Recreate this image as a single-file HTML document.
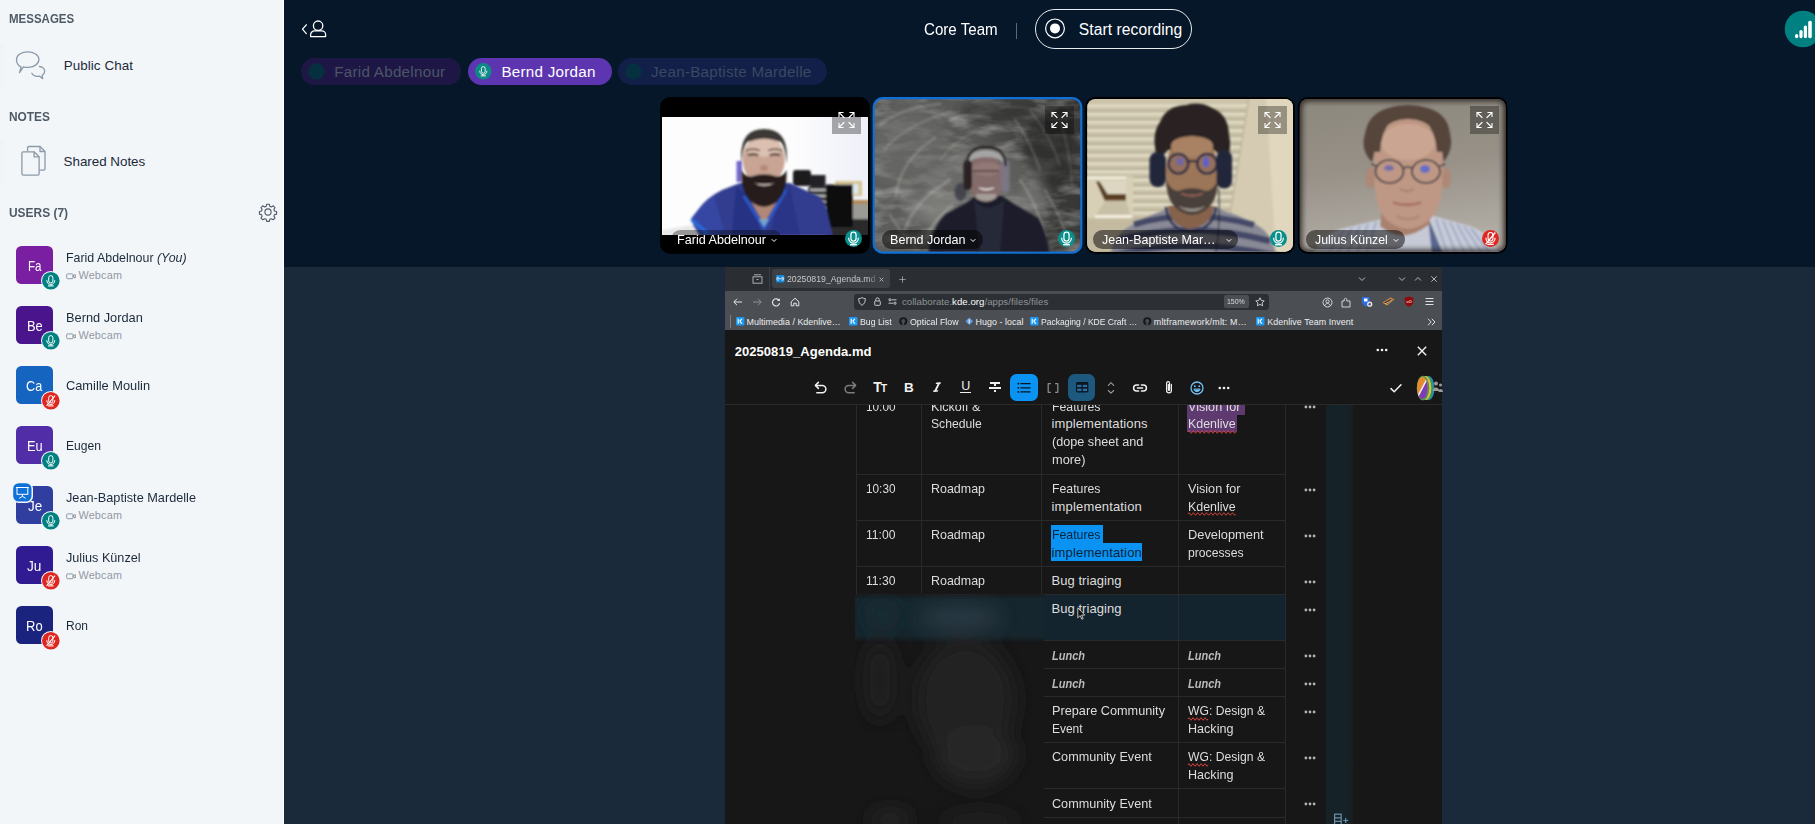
<!DOCTYPE html>
<html><head><meta charset="utf-8"><style>

html,body{margin:0;padding:0}
body{width:1815px;height:824px;overflow:hidden;position:relative;background:#06172A;font-family:"Liberation Sans",sans-serif}
.a{position:absolute;box-sizing:border-box}
.t{position:absolute;white-space:nowrap;line-height:1;display:block}
svg{position:absolute;overflow:visible}

</style></head><body>
<div class="a" style="left:284px;top:0px;width:1531px;height:267px;background:#06172A;"></div>
<div class="a" style="left:284px;top:267px;width:1531px;height:557px;background:#1B2A3A;"></div>
<div class="a" style="left:0px;top:0px;width:284px;height:824px;background:#F3F6F9;border-right:1px solid #fff;"></div>
<div class="a" style="left:0px;top:43px;width:3.5px;height:45px;background:#F0F3F7;"></div>
<div class="a" style="left:0px;top:139px;width:3.5px;height:45px;background:#F0F3F7;"></div>
<span class="t" style="left:9.1px;top:11px;font-size:13px;line-height:15px;color:#4E5A66;font-weight:700;transform:scaleX(0.8848);transform-origin:0 0;">MESSAGES</span>
<span class="t" style="left:9.2px;top:109px;font-size:13px;line-height:15px;color:#4E5A66;font-weight:700;transform:scaleX(0.9152);transform-origin:0 0;">NOTES</span>
<span class="t" style="left:9.2px;top:205px;font-size:13px;line-height:15px;color:#4E5A66;font-weight:700;transform:scaleX(0.9176);transform-origin:0 0;">USERS (7)</span>
<svg style="left:14px;top:48px" width="36" height="36" viewBox="14 48 36 36" fill="none" stroke="#8B9AA8" stroke-width="1.3" stroke-linejoin="round" stroke-linecap="round"><path d="M27.7 51.8c6.2 0 11.2 3.5 11.2 7.8s-5 7.8-11.2 7.8c-1.5 0-3-.2-4.300-.6L19.500 72.600l1.600-5.400c-2.800-1.400-4.600-4-4.600-7.600 0-4.300 5-7.800 11.200-7.800z"/><path d="M39.500 66.500c2.900.300 5.200 2.300 5.200 4.800 0 1.700-1 3.100-2.600 4l.6 3.400-3.300-2.600c-.6.100-1.200.2-1.800.2-2.600 0-4.800-1.200-5.800-3"/></svg>
<span class="t" style="left:63.7px;top:58px;font-size:13.4px;line-height:15px;color:#1B2A3A;letter-spacing:0.082px;">Public Chat</span>
<svg style="left:18px;top:142px" width="32" height="38" viewBox="18 142 32 38" fill="none" stroke="#8B9AA8" stroke-width="1.3" stroke-linejoin="round"><path d="M27.600 151.500v-3.600c0-.8.600-1.400 1.400-1.400h11l5 5v17.200c0 .8-.6 1.400-1.400 1.400h-4.300"/><path d="M40 146.500v5h5"/><path d="M23.300 151.800h10.800l5 5v17c0 .8-.6 1.400-1.400 1.400H23.300c-.8 0-1.400-.6-1.400-1.400v-20.600c0-.8.600-1.400 1.400-1.400z" fill="#F3F6F9"/><path d="M34.100 151.800v5h5"/></svg>
<span class="t" style="left:63.6px;top:154px;font-size:13.4px;line-height:15px;color:#1B2A3A;letter-spacing:-0.026px;">Shared Notes</span>
<svg style="left:259px;top:203px" width="18" height="18" viewBox="-9 -9 18 18" fill="none" stroke="#4E5A66" stroke-width="1.1" stroke-linejoin="round"><circle r="3.1"/><path d="M-1.300 -7.800h2.600l.5 2.100 1.500.6 1.900-1.100 1.800 1.800-1.100 1.900.6 1.500 2.100.5v2.600l-2.100.5-.6 1.500 1.100 1.900-1.800 1.800-1.900-1.100-1.500.6-.5 2.100h-2.600l-.5-2.100-1.500-.6-1.900 1.100-1.800-1.800 1.100-1.900-.6-1.500-2.100-.5v-2.600l2.100-.5.6-1.500-1.100-1.900 1.800-1.800 1.900 1.100 1.500-.6z"/></svg>
<div class="a" style="left:16px;top:246px;width:37px;height:38px;background:#7B1FA2;border-radius:5.500px;"></div>
<span class="t" style="left:27.7px;top:258px;font-size:14.6px;line-height:16px;color:#fff;transform:scaleX(0.7927);transform-origin:0 0;">Fa</span>
<svg style="left:40.0px;top:270.0px" width="21.6" height="21.6" viewBox="-10.8 -10.8 21.6 21.6"><circle r="9.8" fill="#F3F6F9"/><circle r="8.8" fill="#008081"/><g transform="scale(1.0)"><rect x="-2.1" y="-5.2" width="4.2" height="7.4" rx="2.1" fill="none" stroke="#fff" stroke-width="1"/><path d="M-4 -0.6 C-4 5.2 4 5.2 4 -0.6" fill="none" stroke="#fff" stroke-width="1"/><path d="M-2.8 5.1 H2.8" fill="none" stroke="#fff" stroke-width="1.1"/></g></svg>
<span class="t" style="left:66px;top:250px;font-size:13.4px;line-height:15px;color:#1B2A3A;transform:scaleX(0.9257);transform-origin:0 0;">Farid Abdelnour <i>(You)</i></span>
<svg style="left:66px;top:273px" width="11" height="7" viewBox="0 0 11 7" fill="none" stroke="#848D98" stroke-width=".9"><rect x=".7" y=".9" width="6.300" height="4.800" rx=".9"/><path d="M7.300 2.600l2-1v3.400l-2-1z"/></svg>
<span class="t" style="left:78.4px;top:269px;font-size:10.8px;line-height:12px;color:#8F98A3;letter-spacing:0.239px;">Webcam</span>
<div class="a" style="left:16px;top:306px;width:37px;height:38px;background:#4A148C;border-radius:5.500px;"></div>
<span class="t" style="left:26.7px;top:318px;font-size:14.6px;line-height:16px;color:#fff;transform:scaleX(0.8847);transform-origin:0 0;">Be</span>
<svg style="left:40.0px;top:330.0px" width="21.6" height="21.6" viewBox="-10.8 -10.8 21.6 21.6"><circle r="9.8" fill="#F3F6F9"/><circle r="8.8" fill="#008081"/><g transform="scale(1.0)"><rect x="-2.1" y="-5.2" width="4.2" height="7.4" rx="2.1" fill="none" stroke="#fff" stroke-width="1"/><path d="M-4 -0.6 C-4 5.2 4 5.2 4 -0.6" fill="none" stroke="#fff" stroke-width="1"/><path d="M-2.8 5.1 H2.8" fill="none" stroke="#fff" stroke-width="1.1"/></g></svg>
<span class="t" style="left:66px;top:310px;font-size:13.4px;line-height:15px;color:#1B2A3A;transform:scaleX(0.9551);transform-origin:0 0;">Bernd Jordan</span>
<svg style="left:66px;top:333px" width="11" height="7" viewBox="0 0 11 7" fill="none" stroke="#848D98" stroke-width=".9"><rect x=".7" y=".9" width="6.300" height="4.800" rx=".9"/><path d="M7.300 2.600l2-1v3.400l-2-1z"/></svg>
<span class="t" style="left:78.4px;top:329px;font-size:10.8px;line-height:12px;color:#8F98A3;letter-spacing:0.239px;">Webcam</span>
<div class="a" style="left:16px;top:366px;width:37px;height:38px;background:#1565C0;border-radius:5.500px;"></div>
<span class="t" style="left:26.3px;top:378px;font-size:14.6px;line-height:16px;color:#fff;transform:scaleX(0.8683);transform-origin:0 0;">Ca</span>
<svg style="left:40.0px;top:390.0px" width="21.6" height="21.6" viewBox="-10.8 -10.8 21.6 21.6"><circle r="9.8" fill="#F3F6F9"/><circle r="8.8" fill="#DF2721"/><g transform="scale(1.0)"><rect x="-2.1" y="-5.2" width="4.2" height="7.4" rx="2.1" fill="none" stroke="#fff" stroke-width="1"/><path d="M-4 -0.6 C-4 5.2 4 5.2 4 -0.6" fill="none" stroke="#fff" stroke-width="1"/><path d="M-2.8 5.1 H2.8" fill="none" stroke="#fff" stroke-width="1.1"/><path d="M-4.2 5 L4.2 -5.2" stroke="#fff" stroke-width="1.1"/></g></svg>
<span class="t" style="left:66px;top:378px;font-size:13.4px;line-height:15px;color:#1B2A3A;transform:scaleX(0.9566);transform-origin:0 0;">Camille Moulin</span>
<div class="a" style="left:16px;top:426px;width:37px;height:38px;background:#512DA8;border-radius:5.500px;"></div>
<span class="t" style="left:26.8px;top:438px;font-size:14.6px;line-height:16px;color:#fff;transform:scaleX(0.8791);transform-origin:0 0;">Eu</span>
<svg style="left:40.0px;top:450.0px" width="21.6" height="21.6" viewBox="-10.8 -10.8 21.6 21.6"><circle r="9.8" fill="#F3F6F9"/><circle r="8.8" fill="#008081"/><g transform="scale(1.0)"><rect x="-2.1" y="-5.2" width="4.2" height="7.4" rx="2.1" fill="none" stroke="#fff" stroke-width="1"/><path d="M-4 -0.6 C-4 5.2 4 5.2 4 -0.6" fill="none" stroke="#fff" stroke-width="1"/><path d="M-2.8 5.1 H2.8" fill="none" stroke="#fff" stroke-width="1.1"/></g></svg>
<span class="t" style="left:66px;top:438px;font-size:13.4px;line-height:15px;color:#1B2A3A;transform:scaleX(0.9036);transform-origin:0 0;">Eugen</span>
<div class="a" style="left:16px;top:486px;width:37px;height:38px;background:#303F9F;border-radius:5.500px;"></div>
<span class="t" style="left:27.6px;top:498px;font-size:14.6px;line-height:16px;color:#fff;transform:scaleX(0.9208);transform-origin:0 0;">Je</span>
<svg style="left:40.0px;top:509.99999999999994px" width="21.6" height="21.6" viewBox="-10.8 -10.8 21.6 21.6"><circle r="9.8" fill="#F3F6F9"/><circle r="8.8" fill="#008081"/><g transform="scale(1.0)"><rect x="-2.1" y="-5.2" width="4.2" height="7.4" rx="2.1" fill="none" stroke="#fff" stroke-width="1"/><path d="M-4 -0.6 C-4 5.2 4 5.2 4 -0.6" fill="none" stroke="#fff" stroke-width="1"/><path d="M-2.8 5.1 H2.8" fill="none" stroke="#fff" stroke-width="1.1"/></g></svg>
<span class="t" style="left:66px;top:490px;font-size:13.4px;line-height:15px;color:#1B2A3A;transform:scaleX(0.9491);transform-origin:0 0;">Jean-Baptiste Mardelle</span>
<svg style="left:66px;top:513px" width="11" height="7" viewBox="0 0 11 7" fill="none" stroke="#848D98" stroke-width=".9"><rect x=".7" y=".9" width="6.300" height="4.800" rx=".9"/><path d="M7.300 2.600l2-1v3.400l-2-1z"/></svg>
<span class="t" style="left:78.4px;top:509px;font-size:10.8px;line-height:12px;color:#8F98A3;letter-spacing:0.239px;">Webcam</span>
<svg style="left:12px;top:482px" width="21" height="21" viewBox="0 0 21 21"><rect x="0" y="0" width="21" height="21" rx="6.500" fill="#F3F6F9"/><rect x="1.200" y="1.200" width="18.300" height="18.300" rx="5.500" fill="#0F70D7"/><g fill="none" stroke="#fff" stroke-width="1"><rect x="5" y="5.500" width="10.800" height="6.800"/><path d="M4 5.500h12.800M10.400 12.300v2M7.200 16.300l3.200-2 3.200 2"/></g></svg>
<div class="a" style="left:16px;top:546px;width:37px;height:38px;background:#311B92;border-radius:5.500px;"></div>
<span class="t" style="left:27.3px;top:558px;font-size:14.6px;line-height:16px;color:#fff;transform:scaleX(0.9337);transform-origin:0 0;">Ju</span>
<svg style="left:40.0px;top:570.0px" width="21.6" height="21.6" viewBox="-10.8 -10.8 21.6 21.6"><circle r="9.8" fill="#F3F6F9"/><circle r="8.8" fill="#DF2721"/><g transform="scale(1.0)"><rect x="-2.1" y="-5.2" width="4.2" height="7.4" rx="2.1" fill="none" stroke="#fff" stroke-width="1"/><path d="M-4 -0.6 C-4 5.2 4 5.2 4 -0.6" fill="none" stroke="#fff" stroke-width="1"/><path d="M-2.8 5.1 H2.8" fill="none" stroke="#fff" stroke-width="1.1"/><path d="M-4.2 5 L4.2 -5.2" stroke="#fff" stroke-width="1.1"/></g></svg>
<span class="t" style="left:66px;top:550px;font-size:13.4px;line-height:15px;color:#1B2A3A;transform:scaleX(0.9454);transform-origin:0 0;">Julius Künzel</span>
<svg style="left:66px;top:573px" width="11" height="7" viewBox="0 0 11 7" fill="none" stroke="#848D98" stroke-width=".9"><rect x=".7" y=".9" width="6.300" height="4.800" rx=".9"/><path d="M7.300 2.600l2-1v3.400l-2-1z"/></svg>
<span class="t" style="left:78.4px;top:569px;font-size:10.8px;line-height:12px;color:#8F98A3;letter-spacing:0.239px;">Webcam</span>
<div class="a" style="left:16px;top:606px;width:37px;height:38px;background:#1A237E;border-radius:5.500px;"></div>
<span class="t" style="left:26.2px;top:618px;font-size:14.6px;line-height:16px;color:#fff;transform:scaleX(0.8898);transform-origin:0 0;">Ro</span>
<svg style="left:40.0px;top:630.0px" width="21.6" height="21.6" viewBox="-10.8 -10.8 21.6 21.6"><circle r="9.8" fill="#F3F6F9"/><circle r="8.8" fill="#DF2721"/><g transform="scale(1.0)"><rect x="-2.1" y="-5.2" width="4.2" height="7.4" rx="2.1" fill="none" stroke="#fff" stroke-width="1"/><path d="M-4 -0.6 C-4 5.2 4 5.2 4 -0.6" fill="none" stroke="#fff" stroke-width="1"/><path d="M-2.8 5.1 H2.8" fill="none" stroke="#fff" stroke-width="1.1"/><path d="M-4.2 5 L4.2 -5.2" stroke="#fff" stroke-width="1.1"/></g></svg>
<span class="t" style="left:66px;top:618px;font-size:13.4px;line-height:15px;color:#1B2A3A;transform:scaleX(0.8951);transform-origin:0 0;">Ron</span>
<svg style="left:300px;top:18px" width="30" height="22" viewBox="300 18 30 22" fill="none" stroke="#fff" stroke-width="1.300" stroke-linecap="round" stroke-linejoin="round"><path d="M306.300 24.800l-3.800 4.400 3.800 4.400"/><circle cx="318.100" cy="25.700" r="4.700"/><path d="M310.600 36.600v-1.800c0-2.200 1.800-3.900 3.900-3.900h7.200c2.200 0 3.900 1.800 3.900 3.900v1.800z"/></svg>
<span class="t" style="left:923.5px;top:21px;font-size:15.6px;line-height:17px;color:#fff;transform:scaleX(0.9699);transform-origin:0 0;">Core Team</span>
<div class="a" style="left:1016px;top:23px;width:1px;height:16px;background:#5F6975;"></div>
<div class="a" style="left:1034.7px;top:9.1px;width:157px;height:39.7px;border:1px solid #E8EBEE;border-radius:20px;"></div>
<svg style="left:1043px;top:16px" width="24" height="25" viewBox="-12 -12.400 24 25"><circle r="9.400" fill="none" stroke="#fff" stroke-width="1.200"/><circle r="5" fill="#fff"/></svg>
<span class="t" style="left:1078.8px;top:21px;font-size:15.6px;line-height:17px;color:#fff;letter-spacing:0.087px;">Start recording</span>
<svg style="left:1784px;top:10px" width="38" height="38" viewBox="-19 -19 38 38"><circle r="18.300" fill="#008081"/><g fill="#fff"><rect x="-8" y="5" width="3.200" height="4.200" rx="1.600"/><rect x="-3.600" y="1" width="3.200" height="8.200" rx="1.600"/><rect x=".8" y="-3.500" width="3.200" height="12.700" rx="1.600"/><rect x="5.200" y="-8.300" width="3.600" height="17.500" rx="1.600"/></g></svg>
<div class="a" style="left:301px;top:58px;width:160px;height:26.7px;background:#1E1745;border-radius:13.400px;"></div>
<svg style="left:308px;top:63px" width="17" height="17" viewBox="-8.500 -8.500 17 17"><circle r="8.300" fill="#062F40"/></svg>
<span class="t" style="left:334.2px;top:63px;font-size:15.2px;line-height:17px;color:#4C5568;letter-spacing:0.269px;">Farid Abdelnour</span>
<div class="a" style="left:467.9px;top:58px;width:144.3px;height:26.7px;background:#5E35B1;border-radius:13.400px;"></div>
<svg style="left:473.3px;top:61.10000000000001px" width="20.6" height="20.6" viewBox="-10.3 -10.3 20.6 20.6"><circle r="8.3" fill="#0B8A86"/><g transform="scale(0.9)"><rect x="-2.1" y="-5.2" width="4.2" height="7.4" rx="2.1" fill="none" stroke="#fff" stroke-width="1"/><path d="M-4 -0.6 C-4 5.2 4 5.2 4 -0.6" fill="none" stroke="#fff" stroke-width="1"/><path d="M-2.8 5.1 H2.8" fill="none" stroke="#fff" stroke-width="1.1"/></g></svg>
<span class="t" style="left:501.4px;top:63px;font-size:15.2px;line-height:17px;color:#fff;letter-spacing:0.256px;">Bernd Jordan</span>
<div class="a" style="left:618px;top:58px;width:209px;height:26.7px;background:#111F49;border-radius:13.400px;"></div>
<svg style="left:625px;top:63px" width="17" height="17" viewBox="-8.500 -8.500 17 17"><circle r="8.300" fill="#062F40"/></svg>
<span class="t" style="left:651px;top:63px;font-size:15.2px;line-height:17px;color:#3C4861;letter-spacing:0.236px;">Jean-Baptiste Mardelle</span>
<svg style="left:650px;top:90px" width="870" height="172" viewBox="650 90 870 172"><defs><filter id="b1" x="-20%" y="-20%" width="140%" height="140%"><feGaussianBlur stdDeviation="1.200"/></filter><filter id="b2" x="-20%" y="-20%" width="140%" height="140%"><feGaussianBlur stdDeviation="2.500"/></filter><filter id="b4" x="-30%" y="-30%" width="160%" height="160%"><feGaussianBlur stdDeviation="5"/></filter><filter id="nz" x="0" y="0" width="100%" height="100%"><feTurbulence type="fractalNoise" baseFrequency=".035 .09" numOctaves="3" seed="7"/><feColorMatrix type="matrix" values="0 0 0 0 .78  0 0 0 0 .78  0 0 0 0 .76  1.500 0 0 0 -.62"/></filter><clipPath id="c1"><rect x="662" y="117" width="206" height="118"/></clipPath><clipPath id="c2"><rect x="874.8000000000001" y="99.2" width="205.4" height="152.29999999999998" rx="8"/></clipPath><clipPath id="c3"><rect x="1087.2" y="99" width="205.8" height="152.7" rx="8"/></clipPath><clipPath id="c4"><rect x="1299.8" y="99" width="205.8" height="152.7" rx="8"/></clipPath><radialGradient id="vg4" cx=".5" cy=".5" r=".72"><stop offset=".8" stop-color="#000" stop-opacity="0"/><stop offset="1" stop-color="#000" stop-opacity=".5"/></radialGradient><linearGradient id="w1" x1="0" x2="1" y1="0" y2="0"><stop offset="0" stop-color="#FDFDFD"/><stop offset="1" stop-color="#EEF0F8"/></linearGradient><linearGradient id="bg3" x1="0" x2="1" y1="0" y2="0"><stop offset="0" stop-color="#EFE6CC"/><stop offset=".55" stop-color="#E9DFC2"/><stop offset="1" stop-color="#D9CCA6"/></linearGradient><linearGradient id="bg2" x1="0" x2="1" y1="0" y2="0"><stop offset="0" stop-color="#5E5E5C"/><stop offset=".5" stop-color="#565654"/><stop offset=".75" stop-color="#3E3E3C"/><stop offset="1" stop-color="#363634"/></linearGradient><linearGradient id="bg4" x1="0" x2=".15" y1="0" y2="1"><stop offset="0" stop-color="#8C877D"/><stop offset=".5" stop-color="#979188"/><stop offset="1" stop-color="#B2ADA5"/></linearGradient></defs><rect x="660" y="97" width="209.8" height="156.7" rx="10" fill="#000"/><g clip-path="url(#c1)"><rect x="662" y="117" width="206" height="118" fill="#FDFDFD"/><rect x="790" y="117" width="78" height="90" fill="url(#w1)"/><g filter="url(#b1)"><rect x="835" y="181" width="27" height="15" fill="#D6C48E"/><rect x="838.500" y="184" width="20" height="10" fill="#DCE8EE"/><rect x="850" y="200" width="20" height="4" fill="#B08A58"/><rect x="850" y="204" width="20" height="16" fill="#9C9A94"/><rect x="826" y="219" width="44" height="18" fill="#2B2B2B"/><rect x="808" y="187" width="20" height="30" fill="#3A3A3C"/><path d="M810 190h16M810 196h16M810 202h16M810 208h16" stroke="#E4E4E4" stroke-width="1.600"/><rect x="825.800" y="184.600" width="27" height="42.500" fill="#0B0B0D"/><rect x="793" y="170" width="18" height="16" rx="3" fill="#1B1B1E"/><rect x="810" y="175" width="15.500" height="12" fill="#242428"/><rect x="736.500" y="161" width="5.500" height="21" fill="#7468CC"/><path d="M662 236 L662 230 L700 224 L730 229 L730 236Z" fill="#E8E8E8"/></g><g filter="url(#b1)"><path d="M700 236 L694 226 L691 219 L698 210 Q706 198 722 190 L740 183 L790 183 L818 196 Q826 202 828 214 L833 236 Z" fill="#303C90"/><path d="M691 219 L698 210 Q704 202 714 196 L724 230 L708 236 L700 236 L694 226Z" fill="#3646A2"/><path d="M691.500 219.500 L708 234" stroke="#2A6ADA" stroke-width="3.400"/><path d="M736 186 L732 236 L762 236 L752 200Z" fill="#283284"/><path d="M790 186 L800 236 L770 236 L778 200Z" fill="#2A3588"/><path d="M744 196 L764 228 L786 190" stroke="#2C5CCC" stroke-width="2.600" fill="none"/><path d="M750 200 L764 224 L780 196Z" fill="#B08874"/><path d="M759 219 L764 227 L769 219Z" fill="#7CA6C4"/><ellipse cx="763.700" cy="160" rx="21" ry="25" fill="#C8A494"/><ellipse cx="764" cy="148" rx="17.500" ry="9" fill="#DCC0B0"/><path d="M741.500 164 Q738 129 764 129 Q790 129 786.500 164 Q785.500 148 781 142 Q764 135 747 142 Q742.500 148 741.500 164Z" fill="#3A3835"/><path d="M741.500 170 Q740 204 764 207 Q788 204 786.500 170 Q784 176 777 176.500 Q764 172 751 176.500 Q744 176 741.500 170Z" fill="#251F1E"/><path d="M754 183 Q764 188.500 775 183 Q764 185.500 754 183Z" fill="#E6D4CC"/><path d="M748 155.500 Q753 153 758.500 155.500M769.500 155.500 Q775 153 780 155.500" stroke="#3A2824" stroke-width="1.800" fill="none"/><path d="M746 150.500 Q753 148 760 150.500M768 150.500 Q775 148 782 150.500" stroke="#4A3830" stroke-width="1.300" fill="none"/><ellipse cx="764" cy="168" rx="4" ry="3" fill="#B48878"/></g></g><rect x="872.6" y="97" width="209.8" height="156.7" rx="10" fill="#0F70D7"/><g clip-path="url(#c2)"><rect x="872.6" y="97" width="209.8" height="156.7" fill="url(#bg2)"/><rect x="872.6" y="97" width="209.8" height="156.7" filter="url(#nz)" opacity=".6"/><g filter="url(#b4)"><ellipse cx="912" cy="150" rx="40" ry="40" fill="#6C6C69" opacity=".55"/><ellipse cx="930" cy="208" rx="26" ry="16" fill="#8A8A87" opacity=".5"/><ellipse cx="1050" cy="150" rx="26" ry="40" fill="#2A2A28" opacity=".65"/><ellipse cx="1000" cy="112" rx="40" ry="12" fill="#2E2E2C" opacity=".6"/><ellipse cx="1030" cy="200" rx="16" ry="14" fill="#7A7A77" opacity=".5"/><ellipse cx="987" cy="205" rx="62" ry="56" fill="#8C8C89" opacity=".35"/></g><g filter="url(#b1)"><path d="M880 125 Q900 108 940 104" stroke="#D8D8D4" stroke-width="3" opacity="0.22" fill="none" stroke-linecap="round"/><path d="M884 150 Q905 125 950 112" stroke="#D8D8D4" stroke-width="2.5" opacity="0.18" fill="none" stroke-linecap="round"/><path d="M896 196 Q900 160 935 138" stroke="#D8D8D4" stroke-width="3" opacity="0.2" fill="none" stroke-linecap="round"/><path d="M905 230 Q915 200 950 180" stroke="#D8D8D4" stroke-width="3.5" opacity="0.22" fill="none" stroke-linecap="round"/><path d="M925 244 Q930 222 952 206" stroke="#D8D8D4" stroke-width="3" opacity="0.25" fill="none" stroke-linecap="round"/><path d="M950 120 Q965 112 990 118" stroke="#D8D8D4" stroke-width="2.5" opacity="0.2" fill="none" stroke-linecap="round"/><path d="M940 160 Q955 140 975 132" stroke="#D8D8D4" stroke-width="2" opacity="0.16" fill="none" stroke-linecap="round"/><path d="M1015 120 Q1030 140 1040 170" stroke="#D8D8D4" stroke-width="2.5" opacity="0.18" fill="none" stroke-linecap="round"/><path d="M1030 110 Q1050 135 1060 165" stroke="#D8D8D4" stroke-width="2" opacity="0.16" fill="none" stroke-linecap="round"/><path d="M1020 180 Q1035 200 1045 235" stroke="#D8D8D4" stroke-width="3" opacity="0.22" fill="none" stroke-linecap="round"/><path d="M1045 190 Q1060 215 1068 240" stroke="#D8D8D4" stroke-width="2.5" opacity="0.2" fill="none" stroke-linecap="round"/><path d="M1000 108 Q1020 104 1045 112" stroke="#D8D8D4" stroke-width="2" opacity="0.14" fill="none" stroke-linecap="round"/><path d="M890 215 Q900 232 915 246" stroke="#D8D8D4" stroke-width="3" opacity="0.2" fill="none" stroke-linecap="round"/><path d="M960 226 Q940 236 925 250" stroke="#D8D8D4" stroke-width="2.5" opacity="0.15" fill="none" stroke-linecap="round"/><path d="M1060 120 Q1070 150 1072 185" stroke="#D8D8D4" stroke-width="2" opacity="0.15" fill="none" stroke-linecap="round"/></g><g filter="url(#b1)"><path d="M928 256 Q932 226 946 214 L966 203 L976 196 L1002 196 L1014 204 L1038 218 Q1046 230 1050 256 Z" fill="#1C1F29"/><path d="M974 200 Q988 216 1004 200 L1000 252 L980 252Z" fill="#262A38"/><ellipse cx="960.500" cy="192" rx="6" ry="9" fill="#3A3C44" opacity=".8"/><ellipse cx="986" cy="178" rx="18" ry="24" fill="#846C6A"/><ellipse cx="986.500" cy="169" rx="14" ry="7" fill="#927876"/><path d="M966 172 Q964 150 986 150 Q1008 150 1006 172 Q1004 162 998 159 Q986 155 974 159 Q968 162 966 172Z" fill="#A4A4A4"/><rect x="963.500" y="160" width="8.500" height="30" rx="4.200" fill="#2A2024"/><rect x="1001" y="160" width="8.500" height="32" rx="4.200" fill="#7C7684"/><path d="M966.500 166 Q968 147 986 147 Q1004 147 1006 166" fill="none" stroke="#2E2628" stroke-width="2.400"/><path d="M973 171h26" stroke="#5A4A48" stroke-width="1.800"/><path d="M979 188 Q986 192 994 188 Q986 190 979 188Z" fill="#E8E0E0" stroke="#E8E0E0" stroke-width=".8"/><path d="M976 198 Q986 204 996 198 L996 194 L976 194Z" fill="#A49C98"/></g></g><rect x="1085.2" y="97" width="209.8" height="156.7" rx="10" fill="#000"/><g clip-path="url(#c3)"><rect x="1085.2" y="97" width="209.8" height="156.7" fill="#CBC3AA"/><g filter="url(#b1)"><rect x="1085.2" y="104.5" width="170" height="2.600" fill="#E6E0CA" opacity=".9"/><rect x="1085.2" y="110.1" width="170" height="2" fill="#B6AE96" opacity=".8"/><rect x="1085.2" y="112.75" width="170" height="2.600" fill="#E6E0CA" opacity=".9"/><rect x="1085.2" y="118.35" width="170" height="2" fill="#B6AE96" opacity=".8"/><rect x="1085.2" y="121" width="170" height="2.600" fill="#E6E0CA" opacity=".9"/><rect x="1085.2" y="126.6" width="170" height="2" fill="#B6AE96" opacity=".8"/><rect x="1085.2" y="129.25" width="170" height="2.600" fill="#E6E0CA" opacity=".9"/><rect x="1085.2" y="134.85" width="170" height="2" fill="#B6AE96" opacity=".8"/><rect x="1085.2" y="137.5" width="170" height="2.600" fill="#E6E0CA" opacity=".9"/><rect x="1085.2" y="143.1" width="170" height="2" fill="#B6AE96" opacity=".8"/><rect x="1085.2" y="145.75" width="170" height="2.600" fill="#E6E0CA" opacity=".9"/><rect x="1085.2" y="151.35" width="170" height="2" fill="#B6AE96" opacity=".8"/><rect x="1085.2" y="154" width="170" height="2.600" fill="#E6E0CA" opacity=".9"/><rect x="1085.2" y="159.6" width="170" height="2" fill="#B6AE96" opacity=".8"/><rect x="1085.2" y="162.25" width="170" height="2.600" fill="#E6E0CA" opacity=".9"/><rect x="1085.2" y="167.85" width="170" height="2" fill="#B6AE96" opacity=".8"/><rect x="1085.2" y="170.5" width="170" height="2.600" fill="#E6E0CA" opacity=".9"/><rect x="1085.2" y="176.1" width="170" height="2" fill="#B6AE96" opacity=".8"/><rect x="1085.2" y="178.75" width="170" height="2.600" fill="#E6E0CA" opacity=".9"/><rect x="1085.2" y="184.35" width="170" height="2" fill="#B6AE96" opacity=".8"/><rect x="1085.2" y="187" width="170" height="2.600" fill="#E6E0CA" opacity=".9"/><rect x="1085.2" y="192.6" width="170" height="2" fill="#B6AE96" opacity=".8"/><rect x="1085.2" y="195.25" width="170" height="2.600" fill="#E6E0CA" opacity=".9"/><rect x="1085.2" y="200.85" width="170" height="2" fill="#B6AE96" opacity=".8"/><rect x="1085.2" y="203.5" width="170" height="2.600" fill="#E6E0CA" opacity=".9"/><rect x="1085.2" y="209.1" width="170" height="2" fill="#B6AE96" opacity=".8"/><rect x="1085.2" y="211.75" width="170" height="2.600" fill="#E6E0CA" opacity=".9"/><rect x="1085.2" y="217.35" width="170" height="2" fill="#B6AE96" opacity=".8"/><path d="M1249 97 L1230 214 L1226 256 L1300 256 L1300 97Z" fill="#D5CBB2"/><path d="M1266 97 L1276 256 L1300 256 L1300 97Z" fill="#E1D7BE"/><path d="M1249 97 L1230 214" stroke="#BEB498" stroke-width="1.500"/><rect x="1086" y="176.500" width="47" height="42" fill="#D8D0B6"/><rect x="1086" y="176.500" width="40" height="2.400" fill="#F4F0E0"/><rect x="1095" y="215" width="37" height="2.800" fill="#F4F0E0"/><path d="M1086 180 L1096 181 L1106 199 L1126 200 L1126 181 L1096 181Z" fill="#DCD6C2"/><path d="M1106 200 L1126 200 L1130 215 L1096 215Z" fill="#C8C0A6"/><path d="M1096 181.500 L1099.500 181.500 L1107.500 194 L1126 194 L1126 200.500 L1104.500 200.500Z" fill="#5A3C24"/><rect x="1086" y="219" width="48" height="38" fill="#C4BAA0"/></g><g filter="url(#b1)"><path d="M1110 256 Q1112 240 1124 230 Q1140 219 1164 210 L1172 206 L1212 206 L1222 210 Q1250 219 1264 230 Q1274 240 1276 256Z" fill="#8A8A96"/><path d="M1118 240 Q1190 220 1270 241" stroke="#444A68" stroke-width="6.500" fill="none"/><path d="M1134 224.500 Q1190 208 1254 225" stroke="#444A68" stroke-width="6" fill="none"/><path d="M1110 256 Q1190 236 1278 256" stroke="#444A68" stroke-width="6.500" fill="none"/><path d="M1168 206 Q1170 226 1190 229 Q1212 226 1214 206Z" fill="#86624C"/><path d="M1166 207 Q1168 229 1190 232 Q1214 229 1216 207" stroke="#2C3150" stroke-width="2.600" fill="none"/><path d="M1158 160 Q1150 136 1160 122 Q1166 106 1186 105 Q1200 101 1212 108 Q1228 114 1229 134 Q1232 148 1227 160 L1214 150 L1168 150Z" fill="#2A2420"/><ellipse cx="1192" cy="172" rx="26" ry="40" fill="#9C7658"/><ellipse cx="1192" cy="146" rx="21" ry="11" fill="#A88264"/><path d="M1166 150 Q1168 130 1192 129 Q1216 130 1218 150 Q1214 137 1192 136 Q1170 137 1166 150Z" fill="#2A2420"/><path d="M1166 178 Q1166 212 1192 215 Q1218 212 1218 178 Q1215 190 1206 191 Q1192 185 1178 191 Q1169 190 1166 178Z" fill="#4A403A"/><path d="M1178 206 Q1192 217 1206 206 Q1192 212 1178 206Z" fill="#9C9690"/><path d="M1181 193.500 Q1192 198 1203 193.500" stroke="#9A6458" stroke-width="1.800" fill="none"/><rect x="1149.500" y="152" width="16.500" height="35" rx="8" fill="#22263A"/><rect x="1216.500" y="150" width="15.500" height="38.500" rx="7.500" fill="#22263A"/><circle cx="1178.400" cy="163.700" r="9.800" fill="#94705A" stroke="#222846" stroke-width="2.200"/><circle cx="1207" cy="163.700" r="9.800" fill="#94705A" stroke="#222846" stroke-width="2.200"/><path d="M1188 162 Q1192.500 160 1197 162" stroke="#1E2440" stroke-width="1.800" fill="none"/><ellipse cx="1206" cy="162" rx="3" ry="5.500" fill="#4C5CE8" opacity=".8"/><ellipse cx="1180" cy="161.500" rx="4" ry="4" fill="#4C5CE8" opacity=".5"/><path d="M1218.500 188 Q1221 220 1215.500 256" stroke="#20202A" stroke-width="1" fill="none"/></g></g><rect x="1297.8" y="97" width="209.8" height="156.7" rx="10" fill="#000"/><g clip-path="url(#c4)"><rect x="1297.8" y="97" width="209.8" height="156.7" fill="url(#bg4)"/><g filter="url(#b1)"><path d="M1312 256 Q1320 236 1342 228.500 L1382 219 L1400 232 L1420 228 L1430 215 L1470 226 Q1492 234 1500 256Z" fill="#C6CAD6"/><path d="M1436 219 L1448 256M1443 220.500 L1457 256M1450 222 L1466 256M1457 224 L1475 256M1464 226 L1484 256M1471 228.500 L1492 256M1376 222 L1366 256M1368 224 L1356 256M1360 226 L1346 256M1352 228 L1336 256M1344 230 L1326 256" stroke="#8E9CC4" stroke-width="1.300"/><path d="M1428 217 L1432 256 L1444 256Z" fill="#5A6890"/><path d="M1382 208 L1380 226 Q1402 246 1430 224 L1430 208Z" fill="#A8826E"/><path d="M1372 162 Q1360 150 1365 134 Q1368 114 1388 108 Q1408 102 1428 108 Q1448 114 1450 134 Q1454 150 1443 162 L1436 140 L1378 140Z" fill="#54443A"/><ellipse cx="1370.500" cy="178" rx="5" ry="10.500" fill="#AE8876"/><ellipse cx="1446" cy="178" rx="5" ry="10.500" fill="#AE8876"/><path d="M1374 160 Q1374 120 1408 119 Q1442 120 1443 160 L1442 190 Q1438 226 1408 229 Q1378 226 1375 190Z" fill="#BE9884"/><ellipse cx="1408" cy="142" rx="27" ry="18" fill="#CAA692"/><path d="M1373 152 Q1374 126 1392 119 Q1381 132 1380 152Z" fill="#54443A"/><path d="M1444 152 Q1443 126 1424 119 Q1436 132 1437 152Z" fill="#54443A"/><ellipse cx="1389.500" cy="171.500" rx="14" ry="11.500" fill="none" stroke="#30303C" stroke-width="1.600"/><ellipse cx="1426" cy="171.500" rx="14" ry="11.500" fill="none" stroke="#30303C" stroke-width="1.600"/><path d="M1372 164 L1376 166M1440 166 L1445 164M1403.500 168 Q1407.500 166 1412 168" stroke="#30303C" stroke-width="1.600" fill="none"/><ellipse cx="1389" cy="168" rx="5" ry="3" fill="#3C4CC8" opacity=".55"/><ellipse cx="1425" cy="169" rx="5" ry="4" fill="#3C5CE0" opacity=".7"/><path d="M1393 202.500 Q1407 207 1421 202.500" stroke="#A86E66" stroke-width="2.800" fill="none"/><path d="M1400 189 Q1407 193 1414 189" stroke="#A67E6C" stroke-width="1.800" fill="none"/><path d="M1396 216 Q1408 222 1420 216" stroke="#B08A76" stroke-width="3" fill="none"/></g><rect x="1297.8" y="97" width="209.8" height="156.7" rx="10" fill="none" stroke="#1A1814" stroke-width="9" filter="url(#b2)" opacity=".75"/></g></svg>
<svg style="left:832.3px;top:105.6px" width="29" height="28" viewBox="0 0 29 28"><rect width="29" height="28" fill="rgba(0,0,0,.33)"/><g fill="none" stroke="#fff" stroke-width="1.100" stroke-linecap="square"><path d="M7 6.500L12 11.500M7 10.500v-4h4"/><path d="M22 6.500L17 11.500M22 10.500v-4h-4"/><path d="M7 21.500L12 16.500M7 17.500v4h4"/><path d="M22 21.500L17 16.500M22 17.500v4h-4"/></g></svg>
<svg style="left:1044.9px;top:105.6px" width="29" height="28" viewBox="0 0 29 28"><rect width="29" height="28" fill="rgba(0,0,0,.33)"/><g fill="none" stroke="#fff" stroke-width="1.100" stroke-linecap="square"><path d="M7 6.500L12 11.500M7 10.500v-4h4"/><path d="M22 6.500L17 11.500M22 10.500v-4h-4"/><path d="M7 21.500L12 16.500M7 17.500v4h4"/><path d="M22 21.500L17 16.500M22 17.500v4h-4"/></g></svg>
<svg style="left:1257.5px;top:105.6px" width="29" height="28" viewBox="0 0 29 28"><rect width="29" height="28" fill="rgba(0,0,0,.33)"/><g fill="none" stroke="#fff" stroke-width="1.100" stroke-linecap="square"><path d="M7 6.500L12 11.500M7 10.500v-4h4"/><path d="M22 6.500L17 11.500M22 10.500v-4h-4"/><path d="M7 21.500L12 16.500M7 17.500v4h4"/><path d="M22 21.500L17 16.500M22 17.500v4h-4"/></g></svg>
<svg style="left:1470.1px;top:105.6px" width="29" height="28" viewBox="0 0 29 28"><rect width="29" height="28" fill="rgba(0,0,0,.33)"/><g fill="none" stroke="#fff" stroke-width="1.100" stroke-linecap="square"><path d="M7 6.500L12 11.500M7 10.500v-4h4"/><path d="M22 6.500L17 11.500M22 10.500v-4h-4"/><path d="M7 21.500L12 16.500M7 17.500v4h4"/><path d="M22 21.500L17 16.500M22 17.500v4h-4"/></g></svg>
<div class="a" style="left:670.6px;top:230.2px;width:111.4px;height:18.6px;background:rgba(0,0,0,0.35);border-radius:9.300px;"></div>
<span class="t" style="left:677.4px;top:232px;font-size:13.3px;line-height:15px;color:#fff;transform:scaleX(0.9479);transform-origin:0 0;">Farid Abdelnour</span>
<svg style="left:771px;top:238px" width="6" height="5" viewBox="0 0 6 5" fill="none" stroke="#fff" stroke-width="1"><path d="M.7 1.200l2.300 2.300 2.300-2.300"/></svg>
<div class="a" style="left:882px;top:230.2px;width:101px;height:18.6px;background:rgba(0,0,0,0.5);border-radius:9.300px;"></div>
<span class="t" style="left:889.8px;top:232px;font-size:13.3px;line-height:15px;color:#fff;transform:scaleX(0.9456);transform-origin:0 0;">Bernd Jordan</span>
<svg style="left:970px;top:238px" width="6" height="5" viewBox="0 0 6 5" fill="none" stroke="#fff" stroke-width="1"><path d="M.7 1.200l2.300 2.300 2.300-2.300"/></svg>
<div class="a" style="left:1093px;top:230.2px;width:145px;height:18.6px;background:rgba(0,0,0,0.5);border-radius:9.300px;"></div>
<span class="t" style="left:1102px;top:232px;font-size:13.3px;line-height:15px;color:#fff;transform:scaleX(0.9364);transform-origin:0 0;">Jean-Baptiste Mar…</span>
<svg style="left:1226px;top:238px" width="6" height="5" viewBox="0 0 6 5" fill="none" stroke="#fff" stroke-width="1"><path d="M.7 1.200l2.300 2.300 2.300-2.300"/></svg>
<div class="a" style="left:1306px;top:230.2px;width:99px;height:18.6px;background:rgba(0,0,0,0.5);border-radius:9.300px;"></div>
<span class="t" style="left:1314.8px;top:232px;font-size:13.3px;line-height:15px;color:#fff;transform:scaleX(0.9291);transform-origin:0 0;">Julius Künzel</span>
<svg style="left:1393px;top:238px" width="6" height="5" viewBox="0 0 6 5" fill="none" stroke="#fff" stroke-width="1"><path d="M.7 1.200l2.300 2.300 2.300-2.300"/></svg>
<svg style="left:843.0px;top:227.9px" width="21.0" height="21.0" viewBox="-10.5 -10.5 21.0 21.0"><circle r="8.5" fill="#0A8F8C"/><g transform="scale(1.22)"><rect x="-2.1" y="-5.2" width="4.2" height="7.4" rx="2.1" fill="none" stroke="#fff" stroke-width="1"/><path d="M-4 -0.6 C-4 5.2 4 5.2 4 -0.6" fill="none" stroke="#fff" stroke-width="1"/><path d="M-2.8 5.1 H2.8" fill="none" stroke="#fff" stroke-width="1.1"/></g></svg>
<svg style="left:1055.5px;top:227.9px" width="21.0" height="21.0" viewBox="-10.5 -10.5 21.0 21.0"><circle r="8.5" fill="#0A8F8C"/><g transform="scale(1.22)"><rect x="-2.1" y="-5.2" width="4.2" height="7.4" rx="2.1" fill="none" stroke="#fff" stroke-width="1"/><path d="M-4 -0.6 C-4 5.2 4 5.2 4 -0.6" fill="none" stroke="#fff" stroke-width="1"/><path d="M-2.8 5.1 H2.8" fill="none" stroke="#fff" stroke-width="1.1"/></g></svg>
<svg style="left:1268.1px;top:227.9px" width="21.0" height="21.0" viewBox="-10.5 -10.5 21.0 21.0"><circle r="8.5" fill="#0A8F8C"/><g transform="scale(1.22)"><rect x="-2.1" y="-5.2" width="4.2" height="7.4" rx="2.1" fill="none" stroke="#fff" stroke-width="1"/><path d="M-4 -0.6 C-4 5.2 4 5.2 4 -0.6" fill="none" stroke="#fff" stroke-width="1"/><path d="M-2.8 5.1 H2.8" fill="none" stroke="#fff" stroke-width="1.1"/></g></svg>
<svg style="left:1480.3px;top:227.9px" width="21.0" height="21.0" viewBox="-10.5 -10.5 21.0 21.0"><circle r="8.5" fill="#DF2721"/><g transform="scale(1.15)"><rect x="-2.1" y="-5.2" width="4.2" height="7.4" rx="2.1" fill="none" stroke="#fff" stroke-width="1"/><path d="M-4 -0.6 C-4 5.2 4 5.2 4 -0.6" fill="none" stroke="#fff" stroke-width="1"/><path d="M-2.8 5.1 H2.8" fill="none" stroke="#fff" stroke-width="1.1"/><path d="M-4.2 5 L4.2 -5.2" stroke="#fff" stroke-width="1.1"/></g></svg>
<div class="a" style="left:725px;top:267px;width:717px;height:23.5px;background:#2A2E32;"></div>
<div class="a" style="left:725px;top:290.5px;width:717px;height:39.8px;background:#4B4F53;"></div>
<div class="a" style="left:725px;top:330.3px;width:717px;height:494px;background:#171717;"></div>
<div class="a" style="left:772px;top:269.3px;width:118px;height:19px;background:#3D4145;border-radius:3px;"></div>
<div class="a" style="left:769.3px;top:267px;width:1px;height:23.5px;background:#3A3E42;"></div>
<svg style="left:752px;top:274px" width="11" height="10" viewBox="0 0 11 10" fill="none" stroke="#B8BABC" stroke-width=".9"><path d="M2 .8h7"/><rect x="1" y="2.800" width="9" height="6.400"/><path d="M4.500 5.500h2"/></svg>
<svg style="left:776px;top:275px" width="8.500" height="7.500" viewBox="0 0 9 8"><rect width="9" height="8" rx="1" fill="#1488D8"/><path d="M1.500 4h6M3 2.500a1.600 1.600 0 100 3M6 2.500a1.600 1.600 0 110 3" stroke="#fff" stroke-width=".8" fill="none"/></svg>
<span class="t" style="left:787.3px;top:274px;font-size:9.2px;line-height:10px;color:#C6C8CA;transform:scaleX(0.9518);transform-origin:0 0;">20250819_Agenda.md</span>
<div class="a" style="left:868px;top:270px;width:10px;height:18px;background:linear-gradient(90deg,rgba(61,65,69,0),#3D4145);"></div>
<svg style="left:879px;top:276.500px" width="5" height="5" viewBox="0 0 5 5" stroke="#C0C2C4" stroke-width=".75"><path d="M.6.600l3.800 3.800M4.400.600L.6 4.400"/></svg>
<svg style="left:898.500px;top:275.500px" width="7" height="7" viewBox="0 0 7 7" stroke="#B6B8BA" stroke-width=".7"><path d="M3.500.3v6.400M.3 3.500h6.400"/></svg>
<svg style="left:1357px;top:273.500px" width="10" height="10" viewBox="-5 -5 10 10" fill="none" stroke="#C4C6C8" stroke-width=".9"><path d="M-3 -1.500l3 3 3-3"/></svg>
<svg style="left:1397px;top:273.500px" width="10" height="10" viewBox="-5 -5 10 10" fill="none" stroke="#C4C6C8" stroke-width=".9"><path d="M-3 -1.500l3 3 3-3"/></svg>
<svg style="left:1413.4px;top:273.500px" width="10" height="10" viewBox="-5 -5 10 10" fill="none" stroke="#C4C6C8" stroke-width=".9"><path d="M-3 1.500l3-3 3 3"/></svg>
<svg style="left:1429.3px;top:273.500px" width="10" height="10" viewBox="-5 -5 10 10" fill="none" stroke="#C4C6C8" stroke-width=".9"><path d="M-2.700 -2.700l5.400 5.400M2.700 -2.700l-5.400 5.400"/></svg>
<svg style="left:733px;top:296.500px" width="10" height="10" viewBox="-5 -5 10 10" fill="none" stroke="#E6E7E8" stroke-width="1"><path d="M4 0h-8M-1 -3.200l-3.200 3.200 3.200 3.200"/></svg>
<svg style="left:752px;top:296.500px" width="10" height="10" viewBox="-5 -5 10 10" fill="none" stroke="#8D9194" stroke-width="1"><path d="M-4 0h8M1 -3.200l3.200 3.200-3.200 3.200"/></svg>
<svg style="left:771px;top:296.500px" width="10" height="10" viewBox="-5 -5 10 10" fill="none" stroke="#E6E7E8" stroke-width="1.100"><path d="M3.300 -1.200a3.600 3.600 0 10.300 2.400"/><path d="M3.800 -3.800v2.800h-2.800z" fill="#E6E7E8" stroke="none"/></svg>
<svg style="left:790px;top:296.500px" width="10" height="10" viewBox="-5 -5 10 10" fill="none" stroke="#E6E7E8" stroke-width="1" stroke-linejoin="round"><path d="M-3.800 -.2l3.800-3.600 3.800 3.600v4h-2.600v-2.600h-2.400v2.600h-2.600z"/></svg>
<div class="a" style="left:853.5px;top:293.5px;width:415.5px;height:16px;background:#2C3034;border-radius:3px;"></div>
<svg style="left:858px;top:297px" width="8" height="9" viewBox="0 0 8 9" fill="none" stroke="#D4D6D8" stroke-width=".9"><path d="M4 .6c1 .8 2.200 1 3.300 1 0 3.300-.8 5.200-3.300 6.700C1.500 6.800.7 4.900.7 1.600c1.100 0 2.300-.2 3.300-1z"/></svg>
<svg style="left:873.500px;top:296.500px" width="7" height="9" viewBox="0 0 7 9" fill="none" stroke="#D4D6D8" stroke-width=".9"><rect x=".7" y="4" width="5.600" height="4.300" rx=".6"/><path d="M1.800 4v-1.500a1.700 1.700 0 013.400 0v1.500"/></svg>
<svg style="left:888px;top:298px" width="9" height="7" viewBox="0 0 9 7" fill="none" stroke="#D4D6D8" stroke-width=".9"><circle cx="2" cy="1.800" r="1.100"/><path d="M4 1.800h4.500M.5 5.200h4.500"/><circle cx="7" cy="5.200" r="1.100"/></svg>
<span class="t" style="left:901.9px;top:296px;font-size:9.6px;line-height:11px;color:#8F9396;letter-spacing:0.051px;">collaborate.<span style="color:#FBFBFB">kde.org</span>/apps/files/files</span>
<div class="a" style="left:1223.7px;top:295.3px;width:25.5px;height:12.5px;background:#4B4F53;border-radius:2px;"></div>
<span class="t" style="left:1227.3px;top:297px;font-size:7.2px;line-height:9px;color:#DADCDE;transform:scaleX(0.9679);transform-origin:0 0;">150%</span>
<svg style="left:1255px;top:296.500px" width="10" height="10" viewBox="-5 -5 10 10" fill="none" stroke="#D4D6D8" stroke-width=".9" stroke-linejoin="round"><path d="M0 -4.200l1.300 2.700 2.900.4-2.100 2 .5 2.900L0 2.400l-2.600 1.400.5-2.900-2.100-2 2.900-.4z"/></svg>
<svg style="left:1321.500px;top:296.500px" width="11" height="11" viewBox="-5.500 -5.500 11 11" fill="none" stroke="#E0E2E4" stroke-width=".9"><circle r="4.500"/><circle cy="-1.200" r="1.500"/><path d="M-2.800 3.300c.4-1.600 1.500-2.300 2.800-2.300s2.400.7 2.800 2.300"/></svg>
<svg style="left:1341px;top:296.500px" width="10" height="11" viewBox="0 0 10 11" fill="none" stroke="#E0E2E4" stroke-width=".9" stroke-linejoin="round"><path d="M1 4h2.200v-1.300a1.300 1.300 0 012.600 0v1.300h3.200v6h-8z"/></svg>
<svg style="left:1360.500px;top:296px" width="12" height="12" viewBox="0 0 12 12"><path d="M1 1h7.500v4.500c0 2.400-1.500 4-3.700 5C2.500 9.500 1 7.900 1 5.500z" fill="#2D6BE0"/><path d="M3 2.500h3.500v3H3z" fill="#fff"/><circle cx="8.700" cy="8.200" r="2.600" fill="#E8E8EC"/><circle cx="8.700" cy="8.200" r="1.300" fill="#5A5E80"/></svg>
<svg style="left:1381.500px;top:297px" width="13" height="9" viewBox="0 0 13 9"><path d="M.5 5.500l8-5 4 2-7.500 6z" fill="#D98A3A"/><path d="M2 5.500l6.500-3.500 2.500 1-6 4z" fill="#3A3020"/><path d="M3 7l7-4" stroke="#E8E0D0" stroke-width=".8"/></svg>
<svg style="left:1404px;top:296px" width="10" height="11" viewBox="0 0 10 11"><path d="M5 .4l4.300 1.400v4c0 2.400-1.700 4-4.300 4.900C2.400 9.800.7 8.200.7 5.800v-4z" fill="#8E0B0B"/><text x="5" y="6.800" font-size="4" font-weight="700" fill="#F0C8C8" text-anchor="middle" font-family="Liberation Sans">uO</text></svg>
<svg style="left:1425px;top:297px" width="9" height="9" viewBox="0 0 9 9" stroke="#E0E2E4" stroke-width="1"><path d="M.5 1.500h8M.5 4.500h8M.5 7.500h8"/></svg>
<div class="a" style="left:730.4px;top:315px;width:1px;height:13px;background:#7A7E82;"></div>
<svg style="left:736px;top:317.2px" width="8.500" height="8.500" viewBox="0 0 10 10"><rect width="10" height="10" rx="1.200" fill="#1D99F3"/><path d="M2.600 2.200v5.600M4.200 5l2.800-2.800M4.200 5l2.800 2.800" stroke="#fff" stroke-width="1.300" fill="none"/></svg>
<span class="t" style="left:746.5px;top:317px;font-size:8.9px;line-height:10px;color:#EDEEEF;letter-spacing:0.046px;">Multimedia / Kdenlive…</span>
<svg style="left:849.3px;top:317.2px" width="8.500" height="8.500" viewBox="0 0 10 10"><rect width="10" height="10" rx="1.200" fill="#1D99F3"/><path d="M2.600 2.200v5.600M4.200 5l2.800-2.800M4.200 5l2.800 2.800" stroke="#fff" stroke-width="1.300" fill="none"/></svg>
<span class="t" style="left:860.3px;top:317px;font-size:8.9px;line-height:10px;color:#EDEEEF;transform:scaleX(0.9851);transform-origin:0 0;">Bug List</span>
<svg style="left:898.8px;top:317.2px" width="8.500" height="8.500" viewBox="0 0 10 10"><circle cx="5" cy="5" r="4.800" fill="#18191B"/><circle cx="5" cy="4.600" r="2.300" fill="#4A4E52"/><rect x="3.900" y="6" width="2.200" height="3.500" fill="#4A4E52"/></svg>
<span class="t" style="left:909.6px;top:317px;font-size:8.9px;line-height:10px;color:#EDEEEF;transform:scaleX(0.9933);transform-origin:0 0;">Optical Flow</span>
<svg style="left:965px;top:317.200px" width="8.500" height="8.500" viewBox="0 0 10 10"><path d="M5 .5l4.500 4.500L5 9.500.5 5z" fill="#5E9BE0"/><path d="M5 2.500v5" stroke="#E6E0F0" stroke-width="1.500"/></svg>
<span class="t" style="left:975.5px;top:317px;font-size:8.9px;line-height:10px;color:#EDEEEF;letter-spacing:0.049px;">Hugo - local</span>
<svg style="left:1029.5px;top:317.2px" width="8.500" height="8.500" viewBox="0 0 10 10"><rect width="10" height="10" rx="1.200" fill="#1D99F3"/><path d="M2.600 2.200v5.600M4.200 5l2.800-2.800M4.200 5l2.800 2.800" stroke="#fff" stroke-width="1.300" fill="none"/></svg>
<span class="t" style="left:1040.5px;top:317px;font-size:8.9px;line-height:10px;color:#EDEEEF;transform:scaleX(0.9606);transform-origin:0 0;">Packaging / KDE Craft …</span>
<svg style="left:1143px;top:317.2px" width="8.500" height="8.500" viewBox="0 0 10 10"><circle cx="5" cy="5" r="4.800" fill="#18191B"/><circle cx="5" cy="4.600" r="2.300" fill="#4A4E52"/><rect x="3.900" y="6" width="2.200" height="3.500" fill="#4A4E52"/></svg>
<span class="t" style="left:1153.8px;top:317px;font-size:8.9px;line-height:10px;color:#EDEEEF;letter-spacing:0.213px;">mltframework/mlt: M…</span>
<svg style="left:1256.4px;top:317.2px" width="8.500" height="8.500" viewBox="0 0 10 10"><rect width="10" height="10" rx="1.200" fill="#1D99F3"/><path d="M2.600 2.200v5.600M4.200 5l2.800-2.800M4.200 5l2.800 2.800" stroke="#fff" stroke-width="1.300" fill="none"/></svg>
<span class="t" style="left:1267.2px;top:317px;font-size:8.9px;line-height:10px;color:#EDEEEF;letter-spacing:0.068px;">Kdenlive Team Invent</span>
<svg style="left:1427px;top:317.500px" width="9" height="8" viewBox="0 0 9 8" fill="none" stroke="#E0E2E4" stroke-width="1"><path d="M1 .8l3.200 3.200L1 7.200M4.800 .8L8 4 4.800 7.200"/></svg>
<span class="t" style="left:734.7px;top:344px;font-size:13px;line-height:15px;color:#FFFFFF;font-weight:700;letter-spacing:0.055px;">20250819_Agenda.md</span>
<svg style="left:1374px;top:347.2px" width="16" height="6" viewBox="-8 -3 16 6" fill="#F2F2F2"><circle cx="-4.2" r="1.3"/><circle r="1.3"/><circle cx="4.2" r="1.3"/></svg>
<svg style="left:1417px;top:345.500px" width="10" height="10" viewBox="0 0 10 10" stroke="#F2F2F2" stroke-width="1.400"><path d="M.8.800l8.400 8.400M9.200.800L.8 9.200"/></svg>
<div class="a" style="left:856.75px;top:594.4px;width:428.45000000000005px;height:46.200000000000045px;background:#13242E;"></div>
<div class="a" style="left:1326px;top:404.5px;width:27px;height:420px;background:linear-gradient(90deg,#172125,#152328 30%,#162226 80%,#171E20);"></div>
<div class="a" style="left:856.75px;top:473.9px;width:428.45000000000005px;height:1px;background:#2A2A2A;"></div>
<div class="a" style="left:856.75px;top:520.0px;width:428.45000000000005px;height:1px;background:#2A2A2A;"></div>
<div class="a" style="left:856.75px;top:565.9px;width:428.45000000000005px;height:1px;background:#2A2A2A;"></div>
<div class="a" style="left:856.75px;top:593.9px;width:428.45000000000005px;height:1px;background:#2A2A2A;"></div>
<div class="a" style="left:856.75px;top:640.1px;width:428.45000000000005px;height:1px;background:#2A2A2A;"></div>
<div class="a" style="left:856.75px;top:668.2px;width:428.45000000000005px;height:1px;background:#2A2A2A;"></div>
<div class="a" style="left:856.75px;top:696.0px;width:428.45000000000005px;height:1px;background:#2A2A2A;"></div>
<div class="a" style="left:856.75px;top:742.0px;width:428.45000000000005px;height:1px;background:#2A2A2A;"></div>
<div class="a" style="left:856.75px;top:788.3px;width:428.45000000000005px;height:1px;background:#2A2A2A;"></div>
<div class="a" style="left:856.75px;top:816.7px;width:428.45000000000005px;height:1px;background:#2A2A2A;"></div>
<div class="a" style="left:856.25px;top:391px;width:1px;height:433px;background:#2A2A2A;"></div>
<div class="a" style="left:921.1px;top:391px;width:1px;height:433px;background:#2A2A2A;"></div>
<div class="a" style="left:1041.2px;top:391px;width:1px;height:433px;background:#2A2A2A;"></div>
<div class="a" style="left:1178.0px;top:391px;width:1px;height:433px;background:#2A2A2A;"></div>
<div class="a" style="left:1284.7px;top:391px;width:1px;height:433px;background:#2A2A2A;"></div>
<svg style="left:850px;top:590px" width="200" height="234" viewBox="850 590 200 234"><defs><filter id="bb" x="-20%" y="-20%" width="140%" height="140%"><feGaussianBlur stdDeviation="10"/></filter><filter id="bs" x="-10%" y="-30%" width="120%" height="160%"><feGaussianBlur stdDeviation="2.500"/></filter><clipPath id="cb"><rect x="855" y="594" width="189" height="230"/></clipPath></defs><g clip-path="url(#cb)"><rect x="856" y="594.400" width="188" height="230" fill="#171717"/><rect x="850" y="596" width="200" height="43" fill="#15252F" filter="url(#bs)"/><g filter="url(#bb)"><ellipse cx="960" cy="618" rx="42" ry="12" fill="#2A3A44"/><ellipse cx="882" cy="614" rx="16" ry="8" fill="#1F3039"/><ellipse cx="880" cy="680" rx="14" ry="40" fill="#232323"/><ellipse cx="965" cy="700" rx="50" ry="60" fill="#242424"/><ellipse cx="975" cy="755" rx="40" ry="30" fill="#282828"/><ellipse cx="890" cy="820" rx="20" ry="8" fill="#2A2A2A"/><ellipse cx="980" cy="822" rx="40" ry="6" fill="#262626"/></g></g></svg>
<span class="t" style="left:866.15px;top:399px;font-size:13px;line-height:15px;color:#DDDDDD;transform:scaleX(0.9064);transform-origin:0 0;">10:00</span>
<span class="t" style="left:931.0px;top:399px;font-size:13px;line-height:15px;color:#DDDDDD;transform:scaleX(0.9694);transform-origin:0 0;">Kickoff &amp;</span>
<span class="t" style="left:931.0px;top:416px;font-size:13px;line-height:15px;color:#DDDDDD;transform:scaleX(0.9369);transform-origin:0 0;">Schedule</span>
<span class="t" style="left:1051.5px;top:399px;font-size:13px;line-height:15px;color:#DDDDDD;transform:scaleX(0.9452);transform-origin:0 0;">Features</span>
<span class="t" style="left:1051.5px;top:416px;font-size:13px;line-height:15px;color:#DDDDDD;letter-spacing:0.096px;">implementations</span>
<span class="t" style="left:1051.5px;top:434px;font-size:13px;line-height:15px;color:#DDDDDD;transform:scaleX(0.9716);transform-origin:0 0;">(dope sheet and</span>
<span class="t" style="left:1051.5px;top:452px;font-size:13px;line-height:15px;color:#DDDDDD;transform:scaleX(0.9837);transform-origin:0 0;">more)</span>
<div class="a" style="left:1187.3px;top:397px;width:57.3px;height:17.9px;background:#5E3A70;"></div>
<div class="a" style="left:1187.3px;top:414.9px;width:49.3px;height:17.6px;background:#5E3A70;"></div>
<span class="t" style="left:1188.3px;top:399px;font-size:13px;line-height:15px;color:#DDDDDD;transform:scaleX(0.9709);transform-origin:0 0;">Vision for</span>
<span class="t" style="left:1188.3px;top:416px;font-size:13px;line-height:15px;color:#DDDDDD;transform:scaleX(0.9564);transform-origin:0 0;">Kdenlive</span>
<span class="t" style="left:866.15px;top:481px;font-size:13px;line-height:15px;color:#DDDDDD;transform:scaleX(0.9064);transform-origin:0 0;">10:30</span>
<span class="t" style="left:931.0px;top:481px;font-size:13px;line-height:15px;color:#DDDDDD;transform:scaleX(0.9579);transform-origin:0 0;">Roadmap</span>
<span class="t" style="left:1051.5px;top:481px;font-size:13px;line-height:15px;color:#DDDDDD;transform:scaleX(0.9452);transform-origin:0 0;">Features</span>
<span class="t" style="left:1051.5px;top:499px;font-size:13px;line-height:15px;color:#DDDDDD;letter-spacing:0.165px;">implementation</span>
<span class="t" style="left:1188.3px;top:481px;font-size:13px;line-height:15px;color:#DDDDDD;transform:scaleX(0.9709);transform-origin:0 0;">Vision for</span>
<span class="t" style="left:1188.3px;top:499px;font-size:13px;line-height:15px;color:#DDDDDD;transform:scaleX(0.9564);transform-origin:0 0;">Kdenlive</span>
<span class="t" style="left:866.15px;top:527px;font-size:13px;line-height:15px;color:#DDDDDD;transform:scaleX(0.9342);transform-origin:0 0;">11:00</span>
<span class="t" style="left:931.0px;top:527px;font-size:13px;line-height:15px;color:#DDDDDD;transform:scaleX(0.9579);transform-origin:0 0;">Roadmap</span>
<div class="a" style="left:1051px;top:525.4px;width:52px;height:18px;background:#0A93F2;"></div>
<div class="a" style="left:1051px;top:543.4px;width:91px;height:18px;background:#0A93F2;"></div>
<span class="t" style="left:1051.5px;top:527px;font-size:13px;line-height:15px;color:#08243A;transform:scaleX(0.9452);transform-origin:0 0;">Features</span>
<span class="t" style="left:1051.5px;top:545px;font-size:13px;line-height:15px;color:#08243A;letter-spacing:0.165px;">implementation</span>
<span class="t" style="left:1188.3px;top:527px;font-size:13px;line-height:15px;color:#DDDDDD;transform:scaleX(0.9868);transform-origin:0 0;">Development</span>
<span class="t" style="left:1188.3px;top:545px;font-size:13px;line-height:15px;color:#DDDDDD;transform:scaleX(0.9367);transform-origin:0 0;">processes</span>
<span class="t" style="left:866.15px;top:573px;font-size:13px;line-height:15px;color:#DDDDDD;transform:scaleX(0.9342);transform-origin:0 0;">11:30</span>
<span class="t" style="left:931.0px;top:573px;font-size:13px;line-height:15px;color:#DDDDDD;transform:scaleX(0.9579);transform-origin:0 0;">Roadmap</span>
<span class="t" style="left:1051.5px;top:573px;font-size:13px;line-height:15px;color:#DDDDDD;letter-spacing:0.046px;">Bug triaging</span>
<span class="t" style="left:1051.5px;top:601px;font-size:13px;line-height:15px;color:#DDDDDD;letter-spacing:0.046px;">Bug triaging</span>
<span class="t" style="left:1051.5px;top:648px;font-size:13px;line-height:15px;color:#BCBCBC;font-weight:700;font-style:italic;transform:scaleX(0.8462);transform-origin:0 0;">Lunch</span>
<span class="t" style="left:1188.3px;top:648px;font-size:13px;line-height:15px;color:#BCBCBC;font-weight:700;font-style:italic;transform:scaleX(0.8462);transform-origin:0 0;">Lunch</span>
<span class="t" style="left:1051.5px;top:676px;font-size:13px;line-height:15px;color:#BCBCBC;font-weight:700;font-style:italic;transform:scaleX(0.8462);transform-origin:0 0;">Lunch</span>
<span class="t" style="left:1188.3px;top:676px;font-size:13px;line-height:15px;color:#BCBCBC;font-weight:700;font-style:italic;transform:scaleX(0.8462);transform-origin:0 0;">Lunch</span>
<span class="t" style="left:1051.5px;top:703px;font-size:13px;line-height:15px;color:#DDDDDD;transform:scaleX(0.9774);transform-origin:0 0;">Prepare Community</span>
<span class="t" style="left:1051.5px;top:721px;font-size:13px;line-height:15px;color:#DDDDDD;transform:scaleX(0.9203);transform-origin:0 0;">Event</span>
<span class="t" style="left:1188.3px;top:703px;font-size:13px;line-height:15px;color:#DDDDDD;transform:scaleX(0.9349);transform-origin:0 0;">WG: Design &amp;</span>
<span class="t" style="left:1188.3px;top:721px;font-size:13px;line-height:15px;color:#DDDDDD;transform:scaleX(0.9666);transform-origin:0 0;">Hacking</span>
<span class="t" style="left:1051.5px;top:749px;font-size:13px;line-height:15px;color:#DDDDDD;transform:scaleX(0.9718);transform-origin:0 0;">Community Event</span>
<span class="t" style="left:1188.3px;top:749px;font-size:13px;line-height:15px;color:#DDDDDD;transform:scaleX(0.9349);transform-origin:0 0;">WG: Design &amp;</span>
<span class="t" style="left:1188.3px;top:767px;font-size:13px;line-height:15px;color:#DDDDDD;transform:scaleX(0.9666);transform-origin:0 0;">Hacking</span>
<span class="t" style="left:1051.5px;top:796px;font-size:13px;line-height:15px;color:#DDDDDD;transform:scaleX(0.9718);transform-origin:0 0;">Community Event</span>
<svg style="left:1188.4px;top:429.8px" width="47.7" height="4" viewBox="0 0 47.7 4" fill="none" stroke="#D8453E" stroke-width=".95"><path d="M0 2 q1.08 -2.6 2.17 0 q1.08 2.6 2.17 0 q1.08 -2.6 2.17 0 q1.08 2.6 2.17 0 q1.08 -2.6 2.17 0 q1.08 2.6 2.17 0 q1.08 -2.6 2.17 0 q1.08 2.6 2.17 0 q1.08 -2.6 2.17 0 q1.08 2.6 2.17 0 q1.08 -2.6 2.17 0 q1.08 2.6 2.17 0 q1.08 -2.6 2.17 0 q1.08 2.6 2.17 0 q1.08 -2.6 2.17 0 q1.08 2.6 2.17 0 q1.08 -2.6 2.17 0 q1.08 2.6 2.17 0 q1.08 -2.6 2.17 0 q1.08 2.6 2.17 0 q1.08 -2.6 2.17 0 q1.08 2.6 2.17 0"/></svg>
<svg style="left:1188.4px;top:511.9px" width="47.7" height="4" viewBox="0 0 47.7 4" fill="none" stroke="#D8453E" stroke-width=".95"><path d="M0 2 q1.08 -2.6 2.17 0 q1.08 2.6 2.17 0 q1.08 -2.6 2.17 0 q1.08 2.6 2.17 0 q1.08 -2.6 2.17 0 q1.08 2.6 2.17 0 q1.08 -2.6 2.17 0 q1.08 2.6 2.17 0 q1.08 -2.6 2.17 0 q1.08 2.6 2.17 0 q1.08 -2.6 2.17 0 q1.08 2.6 2.17 0 q1.08 -2.6 2.17 0 q1.08 2.6 2.17 0 q1.08 -2.6 2.17 0 q1.08 2.6 2.17 0 q1.08 -2.6 2.17 0 q1.08 2.6 2.17 0 q1.08 -2.6 2.17 0 q1.08 2.6 2.17 0 q1.08 -2.6 2.17 0 q1.08 2.6 2.17 0"/></svg>
<svg style="left:1188.2px;top:716.8px" width="20" height="4" viewBox="0 0 20 4" fill="none" stroke="#D8453E" stroke-width=".95"><path d="M0 2 q1.00 -2.6 2.00 0 q1.00 2.6 2.00 0 q1.00 -2.6 2.00 0 q1.00 2.6 2.00 0 q1.00 -2.6 2.00 0 q1.00 2.6 2.00 0 q1.00 -2.6 2.00 0 q1.00 2.6 2.00 0 q1.00 -2.6 2.00 0 q1.00 2.6 2.00 0"/></svg>
<svg style="left:1188.2px;top:762.8px" width="20" height="4" viewBox="0 0 20 4" fill="none" stroke="#D8453E" stroke-width=".95"><path d="M0 2 q1.00 -2.6 2.00 0 q1.00 2.6 2.00 0 q1.00 -2.6 2.00 0 q1.00 2.6 2.00 0 q1.00 -2.6 2.00 0 q1.00 2.6 2.00 0 q1.00 -2.6 2.00 0 q1.00 2.6 2.00 0 q1.00 -2.6 2.00 0 q1.00 2.6 2.00 0"/></svg>
<svg style="left:1301.5px;top:404.3px" width="16" height="6" viewBox="-8 -3 16 6" fill="#B4B4B4"><circle cx="-4.1" r="1.4"/><circle r="1.4"/><circle cx="4.1" r="1.4"/></svg>
<svg style="left:1301.5px;top:487.0px" width="16" height="6" viewBox="-8 -3 16 6" fill="#B4B4B4"><circle cx="-4.1" r="1.4"/><circle r="1.4"/><circle cx="4.1" r="1.4"/></svg>
<svg style="left:1301.5px;top:533.1px" width="16" height="6" viewBox="-8 -3 16 6" fill="#B4B4B4"><circle cx="-4.1" r="1.4"/><circle r="1.4"/><circle cx="4.1" r="1.4"/></svg>
<svg style="left:1301.5px;top:579.0px" width="16" height="6" viewBox="-8 -3 16 6" fill="#B4B4B4"><circle cx="-4.1" r="1.4"/><circle r="1.4"/><circle cx="4.1" r="1.4"/></svg>
<svg style="left:1301.5px;top:607.0px" width="16" height="6" viewBox="-8 -3 16 6" fill="#B4B4B4"><circle cx="-4.1" r="1.4"/><circle r="1.4"/><circle cx="4.1" r="1.4"/></svg>
<svg style="left:1301.5px;top:653.2px" width="16" height="6" viewBox="-8 -3 16 6" fill="#B4B4B4"><circle cx="-4.1" r="1.4"/><circle r="1.4"/><circle cx="4.1" r="1.4"/></svg>
<svg style="left:1301.5px;top:681.3000000000001px" width="16" height="6" viewBox="-8 -3 16 6" fill="#B4B4B4"><circle cx="-4.1" r="1.4"/><circle r="1.4"/><circle cx="4.1" r="1.4"/></svg>
<svg style="left:1301.5px;top:709.1px" width="16" height="6" viewBox="-8 -3 16 6" fill="#B4B4B4"><circle cx="-4.1" r="1.4"/><circle r="1.4"/><circle cx="4.1" r="1.4"/></svg>
<svg style="left:1301.5px;top:755.1px" width="16" height="6" viewBox="-8 -3 16 6" fill="#B4B4B4"><circle cx="-4.1" r="1.4"/><circle r="1.4"/><circle cx="4.1" r="1.4"/></svg>
<svg style="left:1301.5px;top:801.4px" width="16" height="6" viewBox="-8 -3 16 6" fill="#B4B4B4"><circle cx="-4.1" r="1.4"/><circle r="1.4"/><circle cx="4.1" r="1.4"/></svg>
<svg style="left:1334px;top:814px" width="15" height="11" viewBox="0 0 15 11" fill="none" stroke="#6A8FA8" stroke-width="1.200"><rect x=".6" y=".2" width="6.600" height="11"/><path d="M.6 3.800h6.600M.6 7.400h6.400M9.200 6.500h5M11.700 4v5"/></svg>
<svg style="left:1077px;top:607px" width="9" height="13" viewBox="0 0 9 13"><path d="M.8.800v10l2.400-2.200 1.600 3.600 1.400-.6-1.600-3.500h3.200z" fill="#101010" stroke="#E8E8E8" stroke-width=".8"/></svg>
<div class="a" style="left:725px;top:366px;width:717px;height:38px;background:#171717;"></div>
<div class="a" style="left:725px;top:404px;width:717px;height:1px;background:#2A2A2A;"></div>
<svg style="left:813.3px;top:378.5px" width="16" height="16" viewBox="-8.0 -8.0 16 16" fill="none" stroke="#F0F0F0" stroke-width="1.5" stroke-linecap="round" stroke-linejoin="round" ><path d="M-2.600 -4.600l-3 3 3 3"/><path d="M-5.200 -1.600h6.400a3.700 3.700 0 010 7.400h-5.400"/></svg>
<svg style="left:842.0px;top:378.5px" width="16" height="16" viewBox="-8.0 -8.0 16 16" fill="none" stroke="#7C7C7C" stroke-width="1.5" stroke-linecap="round" stroke-linejoin="round" ><path d="M2.600 -4.600l3 3-3 3"/><path d="M5.200 -1.600h-6.400a3.700 3.700 0 000 7.400h5.400"/></svg>
<span class="t" style="left:873.3px;top:379px;font-size:14px;line-height:16px;color:#F0F0F0;font-weight:700;">T</span>
<span class="t" style="left:880.8px;top:382px;font-size:10.5px;line-height:12px;color:#F0F0F0;font-weight:700;">T</span>
<span class="t" style="left:904px;top:380px;font-size:13.5px;line-height:15px;color:#F0F0F0;font-weight:700;">B</span>
<svg style="left:932px;top:381px" width="11" height="12" viewBox="932 381 11 12" fill="#F0F0F0"><path d="M938.300 382.400h2.100l-4.500 9.400h-2.100z"/><path d="M936.400 382.400h4.700l-.8 1.600h-4.700z"/><path d="M933.700 390.200h4.700l-.8 1.600h-4.700z"/></svg>
<span class="t" style="left:961.3px;top:379px;font-size:12.5px;line-height:14px;color:#F0F0F0;">U</span>
<div class="a" style="left:960.4px;top:391.8px;width:10.8px;height:1.3px;background:#F0F0F0;"></div>
<div class="a" style="left:989.8px;top:382px;width:10.2px;height:1.8px;background:#F0F0F0;"></div>
<div class="a" style="left:993.8px;top:382px;width:2.2px;height:3.6px;background:#F0F0F0;"></div>
<div class="a" style="left:988.8px;top:387px;width:12.3px;height:1.6px;background:#F0F0F0;"></div>
<div class="a" style="left:993.7px;top:390px;width:2.4px;height:2.4px;background:#F0F0F0;"></div>
<div class="a" style="left:1010px;top:374px;width:27.6px;height:27px;background:#0A93F2;border-radius:6.500px;"></div>
<svg style="left:1015.8px;top:379.7px" width="16" height="16" viewBox="-8.0 -8.0 16 16" fill="none" stroke="#08141E" stroke-width="1.3" stroke-linecap="round" stroke-linejoin="round" ><path d="M-3.200 -4.300h9.300M-3.200 -.2h9.300M-3.200 3.900h9.300"/><path d="M-5.700 -4.300h.1M-5.700 -.2h.1M-5.700 3.900h.1" stroke-width="1.800"/></svg>
<svg style="left:1044.7px;top:379.7px" width="16" height="16" viewBox="-8.0 -8.0 16 16" fill="none" stroke="#8A8A8A" stroke-width="1.3" stroke-linecap="round" stroke-linejoin="round" ><path d="M-2.600 -4.300h-2.200v8.600h2.200M2.600 -4.300h2.200v8.600h-2.200"/></svg>
<div class="a" style="left:1068.2px;top:374px;width:27.2px;height:27px;background:#1D587F;border-radius:6.500px;"></div>
<svg style="left:1075.700px;top:382.200px" width="12.300" height="10.500" viewBox="0 0 12.300 10.500"><rect width="12.300" height="10.500" rx="1.400" fill="#0C1620"/><g fill="#2B6E9E"><rect x="1.200" y="2.800" width="4.300" height="2.300"/><rect x="6.800" y="2.800" width="4.300" height="2.300"/><rect x="1.200" y="6.600" width="4.300" height="2.500"/><rect x="6.800" y="6.600" width="4.300" height="2.500"/></g></svg>
<svg style="left:1102.7px;top:379.7px" width="16" height="16" viewBox="-8.0 -8.0 16 16" fill="none" stroke="#9A9A9A" stroke-width="1.1" stroke-linecap="round" stroke-linejoin="round" ><path d="M-2.700 -2.700l2.700-2.600 2.700 2.600M-2.700 2.500l2.700 2.600 2.700-2.600"/></svg>
<svg style="left:1131.5px;top:379.7px" width="16" height="16" viewBox="-8.0 -8.0 16 16" fill="none" stroke="#F0F0F0" stroke-width="1.5" stroke-linecap="round" stroke-linejoin="round" ><path d="M-1.400 -3h-2a3 3 0 000 6h2M1.400 -3h2a3 3 0 010 6h-2M-2.600 0h5.200"/></svg>
<svg style="left:1162.7px;top:378.7px" width="12" height="18" viewBox="-6.0 -9.0 12 18" fill="none" stroke="#F0F0F0" stroke-width="1.2" stroke-linecap="round" stroke-linejoin="round" ><path d="M2.400 -3.600v6a2.400 2.400 0 01-4.800 0v-7.200a1.500 1.500 0 013 0v6.600a.6.600 0 01-1.200 0v-5.400"/></svg>
<svg style="left:1189.2px;top:379.7px" width="16" height="16" viewBox="-8.0 -8.0 16 16" fill="none" stroke="#6FC2F6" stroke-width="1.3" stroke-linecap="round" stroke-linejoin="round" ><circle r="6"/><path d="M-3 1.400c.6 1.500 1.700 2.200 3 2.200s2.400-.7 3-2.200z" fill="#6FC2F6" stroke-width="1"/><path d="M-2.200 -1.800h.1M2.200 -1.800h.1" stroke-width="1.800"/></svg>
<svg style="left:1216.3px;top:384.7px" width="16" height="6" viewBox="-8 -3 16 6" fill="#F0F0F0"><circle cx="-4.2" r="1.3"/><circle r="1.3"/><circle cx="4.2" r="1.3"/></svg>
<svg style="left:1388.4px;top:379.7px" width="16" height="16" viewBox="-8.0 -8.0 16 16" fill="none" stroke="#F0F0F0" stroke-width="1.5" stroke-linecap="round" stroke-linejoin="round" ><path d="M-5 0.600l3.200 3.200 6.800-7"/></svg>
<svg style="left:1411px;top:375px" width="31" height="27" viewBox="1411 375 31 27"><ellipse cx="1428.500" cy="388" rx="6" ry="12" fill="#2E86C8"/><ellipse cx="1427" cy="388" rx="6" ry="12" fill="#2F9D58"/><ellipse cx="1425.300" cy="388" rx="6" ry="12" fill="#E2C23A"/><ellipse cx="1423" cy="388" rx="6.300" ry="12.300" fill="#4E9A52"/><clipPath id="av"><ellipse cx="1422.400" cy="388" rx="5.300" ry="11.300"/></clipPath><g clip-path="url(#av)"><rect x="1415" y="375" width="14" height="27" fill="#E58A2E"/><path d="M1415 402l14-27v27z" fill="#7B3FB0"/><path d="M1416.500 399l10-19" stroke="#F4ECF4" stroke-width="1.600"/></g><g fill="#9C9C9C"><circle cx="1436" cy="383.500" r="1.900"/><path d="M1432.800 391c0-2.400 1.400-3.600 3.200-3.600s3.200 1.200 3.200 3.600z"/><circle cx="1440.500" cy="385" r="1.500"/><path d="M1438.500 392c0-2 1-3 2.200-3s2.200 1 2.200 3z"/></g></svg>
</body></html>
